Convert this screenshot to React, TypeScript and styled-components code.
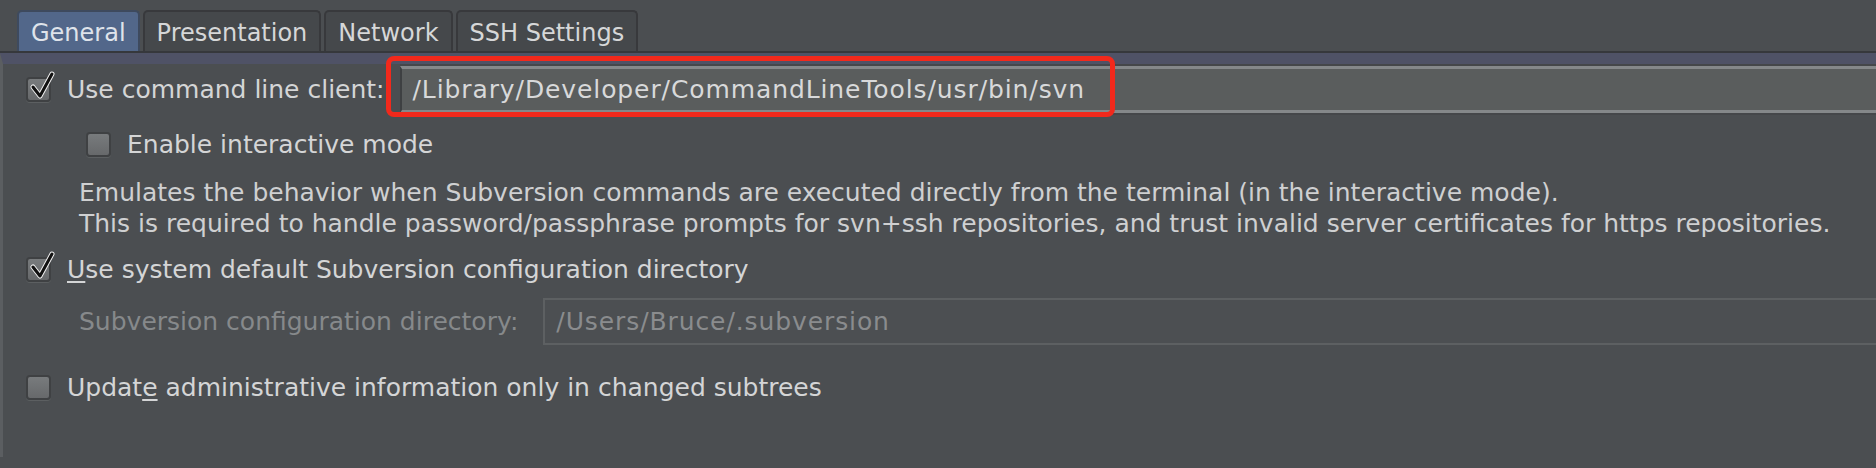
import React from "react";
import styled, { createGlobalStyle } from "styled-components";

const GlobalStyle = createGlobalStyle`
  html, body { margin: 0; padding: 0; background: #4b4e51; }
  body { font-family: "DejaVu Sans", "Liberation Sans", sans-serif; }
`;

const Page = styled.div`
  position: relative;
  width: 1876px;
  height: 468px;
  background: #4b4e51;
  overflow: hidden;
  color: #d2d3d4;
  font-size: 25px;
`;

const TabBar = styled.div`
  display: flex;
  align-items: flex-end;
  height: 53px;
  padding-left: 17px;
  box-sizing: border-box;
  gap: 3px;
  border-bottom: 2px solid #36383c;
`;

const Tab = styled.div<{ $active?: boolean }>`
  display: flex;
  align-items: center;
  justify-content: center;
  height: 41px;
  box-sizing: border-box;
  padding: 2px 12px 0;
  border: 2px solid ${(p) => (p.$active ? "#3e4a5e" : "#38393c")};
  border-bottom: none;
  border-radius: 5px 5px 0 0;
  background: ${(p) => (p.$active ? "#52678a" : "#45484b")};
  color: ${(p) => (p.$active ? "#dfe3ea" : "#d6d7d8")};
  font-size: 24px;
`;

const Panel = styled.div`
  border-left: 3px solid #5b5e61;
  border-top: 11px solid #4f5266;
  height: 404px;
  box-sizing: border-box;
`;

const Row = styled.div<{ $indent?: number; $top?: number; $h?: number }>`
  display: flex;
  align-items: center;
  height: ${(p) => p.$h ?? 47}px;
  margin-top: ${(p) => p.$top ?? 0}px;
  padding-left: ${(p) => p.$indent ?? 23}px;
`;

const Box = styled.div`
  position: relative;
  width: 25px;
  height: 25px;
  box-sizing: border-box;
  border: 2px solid #3f4143;
  border-radius: 4px;
  background: linear-gradient(#787b7d, #67696b);
  box-shadow: 0 1px 0 #5c5f61;
  flex: none;
`;

const Check = styled.svg`
  position: absolute;
  left: 0px;
  top: -8px;
  width: 28px;
  height: 30px;
  overflow: visible;
`;

const Label = styled.span<{ $dim?: boolean }>`
  margin-left: ${(p) => (p.$dim ? 0 : 16)}px;
  color: ${(p) => (p.$dim ? "#86898b" : "#d4d5d6")};
  white-space: nowrap;
`;

const Mn = styled.span`
  text-decoration: underline;
  text-underline-offset: 3px;
`;

const Gap = styled.div<{ $w: number }>`
  width: ${(p) => p.$w}px;
  flex: none;
`;

const Field = styled.div<{ $disabled?: boolean }>`
  flex: 1;
  display: flex;
  align-items: center;
  height: 47px;
  box-sizing: border-box;
  padding-left: 11px;
  white-space: nowrap;
  letter-spacing: 0.9px;
  ${(p) =>
    p.$disabled
      ? `
    background: #4c4f52;
    border: 2px solid #5d6062;
    border-right: none;
    color: #8a8c8e;
  `
      : `
    background: #5a5d5d;
    border-top: 3px solid #85888a;
    border-bottom: 3px solid #85888a;
    border-left: 2px solid #3e4042;
    box-shadow: 0 -2px 0 #45474a, 0 2px 0 #45474a;
    color: #d8d9da;
  `}
`;

const Desc = styled.div`
  padding-left: 76px;
  margin-top: 9px;
  line-height: 31px;
  color: #cfd0d1;
  white-space: nowrap;
`;

const Highlight = styled.div`
  position: absolute;
  left: 386px;
  top: 56px;
  width: 729px;
  height: 61px;
  box-sizing: border-box;
  border: 5px solid #f2291c;
  border-radius: 8px;
  pointer-events: none;
`;

function CheckBox({ checked }: { checked?: boolean }) {
  return (
    <Box>
      {checked && (
        <Check viewBox="0 0 28 30">
          <path d="M5 16 L12 25 L24 3" fill="none" stroke="#f2f2f2" strokeWidth="5" strokeLinecap="round" strokeLinejoin="round" />
          <path d="M5 16 L12 25 L24 3" fill="none" stroke="#111" strokeWidth="3" strokeLinecap="round" strokeLinejoin="round" />
        </Check>
      )}
    </Box>
  );
}

export default function App() {
  return (
    <>
      <GlobalStyle />
      <Page>
        <TabBar>
          <Tab $active>General</Tab>
          <Tab>Presentation</Tab>
          <Tab>Network</Tab>
          <Tab>SSH Settings</Tab>
        </TabBar>
        <Panel>
          <Row $top={2}>
            <CheckBox checked />
            <Label>Use command line client:</Label>
            <Gap $w={15} />
            <Field>/Library/Developer/CommandLineTools/usr/bin/svn</Field>
          </Row>
          <Row $top={8} $indent={83}>
            <CheckBox />
            <Label>Enable interactive mode</Label>
          </Row>
          <Desc>
            Emulates the behavior when Subversion commands are executed directly from the terminal (in the interactive mode).
            <br />
            This is required to handle password/passphrase prompts for svn+ssh repositories, and trust invalid server certificates for https repositories.
          </Desc>
          <Row $top={7}>
            <CheckBox checked />
            <Label>
              <Mn>U</Mn>se system default Subversion configuration directory
            </Label>
          </Row>
          <Row $top={5} $indent={76}>
            <Label $dim>Subversion configuration directory:</Label>
            <Gap $w={25} />
            <Field $disabled>/Users/Bruce/.subversion</Field>
          </Row>
          <Row $top={19}>
            <CheckBox />
            <Label>
              Updat<Mn>e</Mn> administrative information only in changed subtrees
            </Label>
          </Row>
        </Panel>
        <Highlight />
      </Page>
    </>
  );
}
